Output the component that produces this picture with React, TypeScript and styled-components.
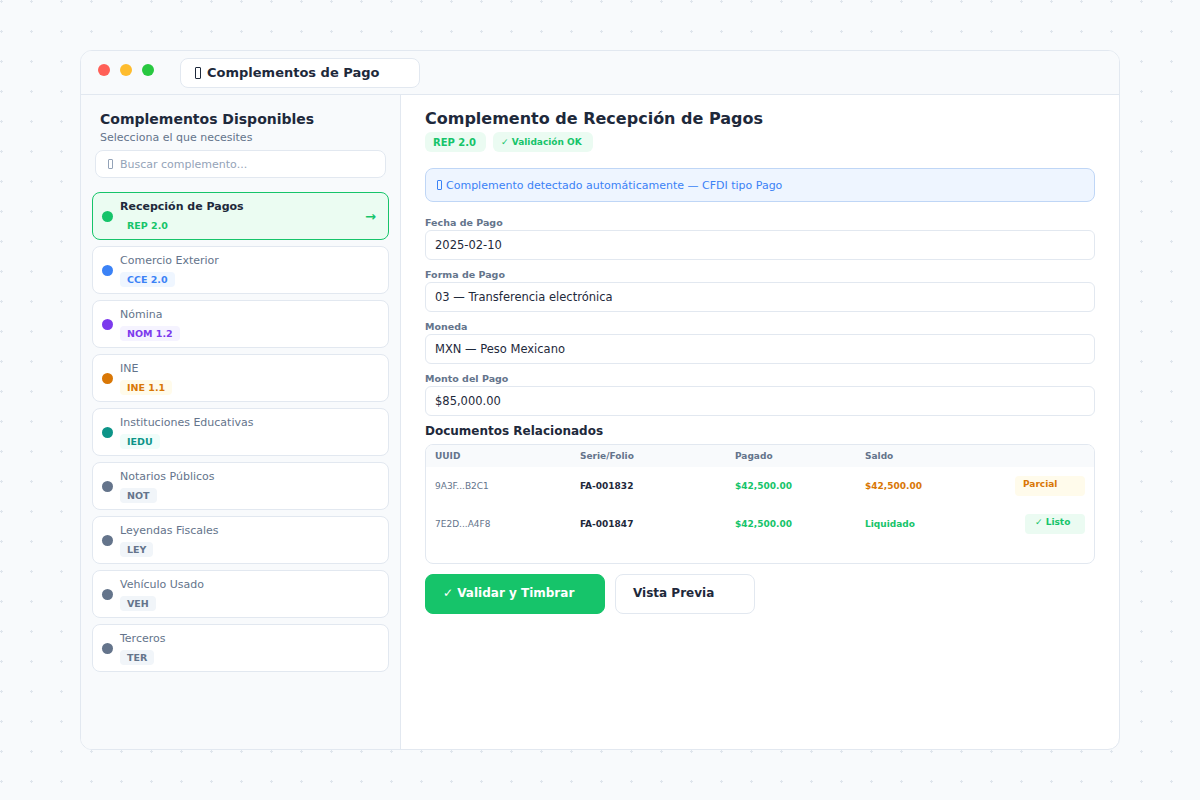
import React from "react";
import styled, { createGlobalStyle } from "styled-components";

const clrs = {
    dark: "#1e293b",
    gray: "#64748b",
    light: "#94a3b8",
    border: "#e2e8f0",
    bg: "#f8fafc",
    green: "#16c46a",
    greenBg: "#ebfbf2",
    orange: "#d97706",
    blue: "#3b82f6",
};

const tile = encodeURIComponent(
    `<svg xmlns="http://www.w3.org/2000/svg" width="30" height="30"><rect x="14" y="15" width="3" height="1" fill="#dfe5ec"/><rect x="15" y="14" width="1" height="3" fill="#dfe5ec"/></svg>`
);

const GlobalStyle = createGlobalStyle`
    html, body {
        margin: 0;
        padding: 0;
        background: ${clrs.bg};
        font-family: "DejaVu Sans", "Noto Sans", sans-serif;
        color: ${clrs.dark};
    }
    body {
        background-image: url("data:image/svg+xml,${tile}");
        background-position: -14px -14px;
    }
`;

type Tone = "green" | "blue" | "purple" | "orange" | "teal" | "gray";

const tones: Record<Tone, { fg: string; bg: string }> = {
    green: { fg: clrs.green, bg: "transparent" },
    blue: { fg: "#3b82f6", bg: "#eff6ff" },
    purple: { fg: "#7c3aed", bg: "#f5f3ff" },
    orange: { fg: "#d97706", bg: "#fffbeb" },
    teal: { fg: "#0d9488", bg: "#f0fdfa" },
    gray: { fg: "#64748b", bg: "#f1f5f9" },
};

const Page = styled.div`
    height: 800px;
    box-sizing: border-box;
    padding: 50px 80px;
    display: flex;
`;

const Window = styled.div`
    flex: 1;
    display: flex;
    flex-direction: column;
    border: 1px solid ${clrs.border};
    border-radius: 12px;
    overflow: hidden;
    background: #fff;
`;

const TitleBar = styled.div`
    height: 43px;
    flex-shrink: 0;
    display: flex;
    align-items: center;
    padding: 0 17px;
    background: ${clrs.bg};
    border-bottom: 1px solid ${clrs.border};
`;

const Lights = styled.div`
    display: flex;
    gap: 10px;
    margin-right: 26px;
    margin-top: -5px;
`;

const Light = styled.span<{ $c: string }>`
    width: 12px;
    height: 12px;
    border-radius: 50%;
    background: ${(p) => p.$c};
`;

const Tab = styled.div`
    width: 240px;
    height: 30px;
    box-sizing: border-box;
    display: flex;
    align-items: center;
    gap: 6px;
    padding: 0 14px;
    background: #fff;
    border: 1px solid ${clrs.border};
    border-radius: 8px;
    font-size: 13px;
    font-weight: bold;
    color: ${clrs.dark};
`;

/* missing-glyph box, as the emoji shows in the reference */
const Tofu = styled.span<{ $h: number }>`
    display: inline-block;
    flex-shrink: 0;
    width: ${(p) => Math.round(p.$h * 0.5)}px;
    height: ${(p) => p.$h}px;
    box-sizing: border-box;
    border: 1px solid currentColor;
    border-radius: 1px;
`;

const Body = styled.div`
    flex: 1;
    display: flex;
    min-height: 0;
`;

const Sidebar = styled.aside`
    width: 320px;
    flex-shrink: 0;
    box-sizing: border-box;
    padding: 15px 11px 0;
    background: ${clrs.bg};
    border-right: 1px solid ${clrs.border};
    display: flex;
    flex-direction: column;
`;

const SideHead = styled.div`
    padding: 0 8px;
`;

const SideTitle = styled.h2`
    margin: 0;
    font-size: 14px;
    line-height: 18px;
    font-weight: bold;
    color: ${clrs.dark};
`;

const SideSub = styled.div`
    margin-top: 3px;
    font-size: 11px;
    line-height: 14px;
    color: ${clrs.gray};
`;

const Search = styled.div`
    margin: 5px 3px 0;
    height: 28px;
    box-sizing: border-box;
    display: flex;
    align-items: center;
    gap: 7px;
    padding: 0 12px;
    background: #fff;
    border: 1px solid ${clrs.border};
    border-radius: 8px;
    font-size: 11px;
    color: ${clrs.light};
`;

const List = styled.div`
    margin-top: 14px;
    display: flex;
    flex-direction: column;
    gap: 6px;
`;

const Item = styled.div<{ $active?: boolean }>`
    height: 48px;
    box-sizing: border-box;
    display: flex;
    align-items: center;
    gap: 7px;
    padding: 0 12px 0 9px;
    background: ${(p) => (p.$active ? "#ebfcf2" : "#fff")};
    border: 1px solid ${(p) => (p.$active ? clrs.green : clrs.border)};
    border-radius: 8px;
`;

const Dot = styled.span<{ $tone: Tone }>`
    width: 11px;
    height: 11px;
    border-radius: 50%;
    flex-shrink: 0;
    background: ${(p) => tones[p.$tone].fg};
`;

const ItemText = styled.div`
    flex: 1;
    display: flex;
    flex-direction: column;
    align-items: flex-start;
`;

const ItemName = styled.div<{ $active?: boolean }>`
    font-size: 11px;
    line-height: 14px;
    font-weight: ${(p) => (p.$active ? "bold" : "normal")};
    color: ${(p) => (p.$active ? clrs.dark : clrs.gray)};
`;

const Tag = styled.span<{ $tone: Tone }>`
    margin-top: 4px;
    height: 15px;
    line-height: 15px;
    padding: 0 7px;
    border-radius: 4px;
    font-size: 9.5px;
    font-weight: bold;
    color: ${(p) => tones[p.$tone].fg};
    background: ${(p) => tones[p.$tone].bg};
`;

const Arrow = styled.span`
    color: ${clrs.green};
    font-size: 13px;
    font-weight: bold;
`;

const Main = styled.main`
    flex: 1;
    padding: 13px 24px 0;
    display: flex;
    flex-direction: column;
    align-items: stretch;
`;

const MainTitle = styled.h1`
    margin: 0;
    font-size: 16px;
    line-height: 22px;
    font-weight: bold;
    color: ${clrs.dark};
`;

const Badges = styled.div`
    margin-top: 2px;
    display: flex;
    gap: 7px;
`;

const Badge = styled.span<{ $w: number; $size: number }>`
    width: ${(p) => p.$w}px;
    height: 20px;
    box-sizing: border-box;
    padding-left: 8px;
    display: flex;
    align-items: center;
    border-radius: 6px;
    background: ${clrs.greenBg};
    color: ${clrs.green};
    font-size: ${(p) => p.$size}px;
    font-weight: bold;
`;

const Info = styled.div`
    margin-top: 16px;
    height: 34px;
    box-sizing: border-box;
    display: flex;
    align-items: center;
    gap: 4px;
    padding: 0 11px;
    background: #eef5ff;
    border: 1px solid #bfd6f6;
    border-radius: 8px;
    font-size: 11px;
    color: ${clrs.blue};
`;

const Fields = styled.div`
    margin-top: 14px;
    display: flex;
    flex-direction: column;
    gap: 8px;
`;

const Field = styled.div`
    display: flex;
    flex-direction: column;
`;

const Label = styled.label`
    font-size: 9.5px;
    line-height: 14px;
    font-weight: bold;
    color: ${clrs.gray};
`;

const Input = styled.div`
    height: 30px;
    box-sizing: border-box;
    display: flex;
    align-items: center;
    padding: 0 9px;
    border: 1px solid ${clrs.border};
    border-radius: 6px;
    font-size: 11.5px;
    color: ${clrs.dark};
`;

const SectionTitle = styled.h3`
    margin: 8px 0 0;
    font-size: 12px;
    line-height: 14px;
    font-weight: bold;
    color: ${clrs.dark};
`;

const Table = styled.div`
    margin-top: 6px;
    border: 1px solid ${clrs.border};
    border-radius: 8px;
    overflow: hidden;
    padding-bottom: 20px;
`;

const Row = styled.div<{ $head?: boolean }>`
    display: grid;
    grid-template-columns: 145px 155px 130px 1fr auto;
    align-items: center;
    height: ${(p) => (p.$head ? 22 : 38)}px;
    padding: 0 9px;
    background: ${(p) => (p.$head ? clrs.bg : "#fff")};
    font-size: 9px;
`;

const Th = styled.span`
    font-weight: bold;
    color: ${clrs.gray};
`;

const Td = styled.span<{ $c?: string; $bold?: boolean }>`
    color: ${(p) => p.$c ?? clrs.gray};
    font-weight: ${(p) => (p.$bold ? "bold" : "normal")};
`;

const Status = styled.span<{ $w: number; $pl: number; $fg: string; $bg: string }>`
    width: ${(p) => p.$w}px;
    height: 20px;
    box-sizing: border-box;
    padding: 3px 0 0 ${(p) => p.$pl}px;
    border-radius: 4px;
    font-size: 9px;
    font-weight: bold;
    color: ${(p) => p.$fg};
    background: ${(p) => p.$bg};
`;

const Actions = styled.div`
    margin-top: 10px;
    display: flex;
    gap: 10px;
`;

const Button = styled.button<{ $primary?: boolean; $w: number }>`
    width: ${(p) => p.$w}px;
    height: 40px;
    padding: 0 0 2px 17px;
    text-align: left;
    border-radius: 8px;
    font-family: inherit;
    font-size: 12px;
    font-weight: bold;
    border: 1px solid ${(p) => (p.$primary ? clrs.green : clrs.border)};
    background: ${(p) => (p.$primary ? clrs.green : "#fff")};
    color: ${(p) => (p.$primary ? "#fff" : clrs.dark)};
`;

const items: { name: string; tag: string; tone: Tone; active?: boolean }[] = [
    { name: "Recepción de Pagos", tag: "REP 2.0", tone: "green", active: true },
    { name: "Comercio Exterior", tag: "CCE 2.0", tone: "blue" },
    { name: "Nómina", tag: "NOM 1.2", tone: "purple" },
    { name: "INE", tag: "INE 1.1", tone: "orange" },
    { name: "Instituciones Educativas", tag: "IEDU", tone: "teal" },
    { name: "Notarios Públicos", tag: "NOT", tone: "gray" },
    { name: "Leyendas Fiscales", tag: "LEY", tone: "gray" },
    { name: "Vehículo Usado", tag: "VEH", tone: "gray" },
    { name: "Terceros", tag: "TER", tone: "gray" },
];

const fields = [
    { label: "Fecha de Pago", value: "2025-02-10" },
    { label: "Forma de Pago", value: "03 — Transferencia electrónica" },
    { label: "Moneda", value: "MXN — Peso Mexicano" },
    { label: "Monto del Pago", value: "$85,000.00" },
];

const App: React.FC = () => (
    <Page>
        <GlobalStyle />
        <Window>
            <TitleBar>
                <Lights>
                    <Light $c="#ff5f57" />
                    <Light $c="#febc2e" />
                    <Light $c="#28c840" />
                </Lights>
                <Tab>
                    <Tofu $h={12} />
                    Complementos de Pago
                </Tab>
            </TitleBar>
            <Body>
                <Sidebar>
                    <SideHead>
                        <SideTitle>Complementos Disponibles</SideTitle>
                        <SideSub>Selecciona el que necesites</SideSub>
                    </SideHead>
                    <Search>
                        <Tofu $h={10} />
                        <span>Buscar complemento...</span>
                    </Search>
                    <List>
                        {items.map((it) => (
                            <Item key={it.name} $active={it.active}>
                                <Dot $tone={it.tone} />
                                <ItemText>
                                    <ItemName $active={it.active}>{it.name}</ItemName>
                                    <Tag $tone={it.tone}>{it.tag}</Tag>
                                </ItemText>
                                {it.active && <Arrow>→</Arrow>}
                            </Item>
                        ))}
                    </List>
                </Sidebar>
                <Main>
                    <MainTitle>Complemento de Recepción de Pagos</MainTitle>
                    <Badges>
                        <Badge $w={61} $size={10}>REP 2.0</Badge>
                        <Badge $w={100} $size={9}>✓ Validación OK</Badge>
                    </Badges>
                    <Info>
                        <Tofu $h={10} />
                        Complemento detectado automáticamente — CFDI tipo Pago
                    </Info>
                    <Fields>
                        {fields.map((f) => (
                            <Field key={f.label}>
                                <Label>{f.label}</Label>
                                <Input>{f.value}</Input>
                            </Field>
                        ))}
                    </Fields>
                    <SectionTitle>Documentos Relacionados</SectionTitle>
                    <Table>
                        <Row $head>
                            <Th>UUID</Th>
                            <Th>Serie/Folio</Th>
                            <Th>Pagado</Th>
                            <Th>Saldo</Th>
                            <span />
                        </Row>
                        <Row>
                            <Td>9A3F...B2C1</Td>
                            <Td $c={clrs.dark} $bold>FA-001832</Td>
                            <Td $c={clrs.green} $bold>$42,500.00</Td>
                            <Td $c={clrs.orange} $bold>$42,500.00</Td>
                            <Status $w={70} $pl={8} $fg={clrs.orange} $bg="#fffbeb">
                                Parcial
                            </Status>
                        </Row>
                        <Row>
                            <Td>7E2D...A4F8</Td>
                            <Td $c={clrs.dark} $bold>FA-001847</Td>
                            <Td $c={clrs.green} $bold>$42,500.00</Td>
                            <Td $c={clrs.green} $bold>Liquidado</Td>
                            <Status $w={60} $pl={10} $fg={clrs.green} $bg={clrs.greenBg}>
                                ✓ Listo
                            </Status>
                        </Row>
                    </Table>
                    <Actions>
                        <Button $primary $w={180}>✓ Validar y Timbrar</Button>
                        <Button $w={140}>Vista Previa</Button>
                    </Actions>
                </Main>
            </Body>
        </Window>
    </Page>
);

export default App;
